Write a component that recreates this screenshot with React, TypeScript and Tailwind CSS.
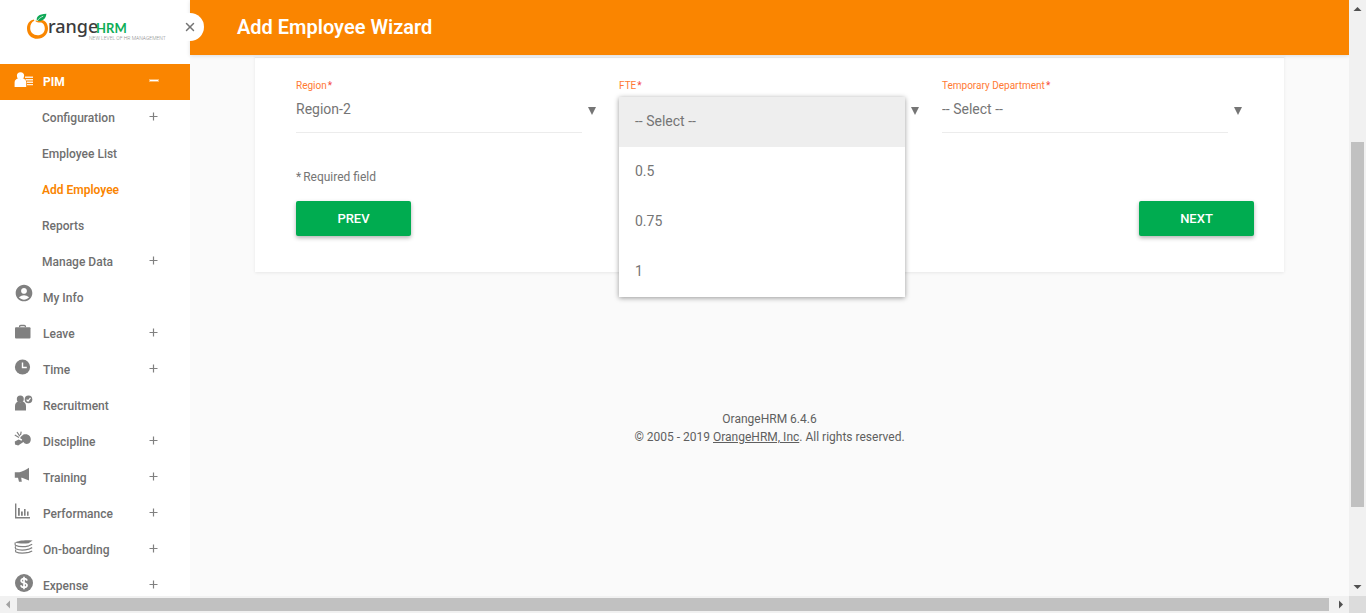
import React, { useState } from "react";
import { X } from "lucide-react";
import { MdAccountCircle } from "react-icons/md";

function PimIcon() {
  return (
    <svg viewBox="0 0 20 16" className="h-4 w-5" fill="currentColor" aria-hidden="true">
      <circle cx="6.5" cy="3.8" r="3.6" />
      <path d="M0.6 15V10.5C0.6 8 2.3 7 4.5 6.3C5.7 7.4 7.3 7.4 8.5 6.3C10.7 7 12.2 8 12.2 10.5V15Z" />
      <path d="M11 4.5H19V5.9H11ZM11.6 7H19V8.4H11.6ZM12.8 9.5H19V10.9H12.8ZM13 12H19V13.2H13Z" opacity="0.85" />
    </svg>
  );
}

function BriefcaseIcon() {
  return (
    <svg viewBox="0 0 18 16" className="h-4 w-4.5" fill="currentColor" aria-hidden="true">
      <path d="M5.6 4.3V3.6Q5.6 2.5 6.7 2.5H10.3Q11.4 2.5 11.400 3.600V4.300" fill="none" stroke="currentColor" strokeWidth="1.300" />
      <rect x="1" y="4.200" width="15.500" height="11.400" rx="1" />
    </svg>
  );
}

function ClockIcon() {
  return (
    <svg viewBox="0 0 18 16" className="h-4 w-4.5" aria-hidden="true">
      <circle cx="8.500" cy="8" r="7.600" fill="currentColor" />
      <path d="M8.500 3.500V8.500H12.800" fill="none" stroke="#fff" strokeWidth="1.400" />
    </svg>
  );
}

function DollarIcon() {
  return (
    <svg viewBox="0 0 20 20" className="size-5" aria-hidden="true">
      <circle cx="10" cy="10" r="9" fill="currentColor" />
      <path
        d="M12.900 7.600C12.700 6.300 11.600 5.700 10 5.700C8.300 5.700 7.200 6.500 7.200 7.800C7.200 10.800 13 9.200 13 12.200C13 13.500 11.800 14.300 10 14.300C8.200 14.300 7.100 13.500 7 12.200M10 3.800V16.200"
        fill="none"
        stroke="#fff"
        strokeWidth="1.700"
      />
    </svg>
  );
}

function RecruitmentIcon() {
  return (
    <svg viewBox="0 0 20 16" className="h-4 w-5" fill="currentColor" aria-hidden="true">
      <circle cx="6.300" cy="4" r="3.500" />
      <path d="M1 15.400V11C1 8.400 2.600 7 4.200 6.600C5.500 7.600 7.300 7.600 8.600 6.600C10.400 7 12 8.400 12 11V15.400Z" />
      <circle cx="14.500" cy="4.400" r="3.800" />
      <path d="M12.600 4.600L14 6L16.500 2.800" fill="none" stroke="#fff" strokeWidth="1.200" />
    </svg>
  );
}

function WhistleIcon() {
  return (
    <svg viewBox="0 0 18 16" className="h-4 w-4.5" fill="currentColor" aria-hidden="true">
      <path d="M6.600 6L9.400 3.600C11.600 2.800 14.200 3.200 15.600 5C17.600 7.600 17 11.400 14.600 12.600C12.400 13.600 10.400 12.600 9.400 11L4.200 14.600L1 13.600L0.800 10.600L4.600 8.600L7.600 9.800L8.200 8.600L6.200 7.200Z" />
      <path d="M0.800 4L5 6.400M3 1L5.800 5.200M7.200 0.600L6.500 4.200" fill="none" stroke="currentColor" strokeWidth="1.200" />
    </svg>
  );
}

function MegaphoneIcon() {
  return (
    <svg viewBox="0 0 16 16" className="size-4" fill="currentColor" aria-hidden="true">
      <path d="M15 0.800V13.600L8 10.800H7.200L7.800 14.800H5L4 10.800H0.800V5.200H5.400C8.600 4.600 11.800 3 15 0.800Z" />
    </svg>
  );
}

function ChartIcon() {
  return (
    <svg viewBox="0 0 16 16" className="size-4" fill="currentColor" aria-hidden="true">
      <path d="M1 0.600H2.400V14H16V15.500H1ZM4 5H5.800V12.800H4ZM7 8.400H8.800V12.800H7ZM10 6H11.600V12.800H10ZM13 8.400H14.600V12.800H13Z" />
    </svg>
  );
}

function StackIcon() {
  return (
    <svg viewBox="0 0 20 16" className="h-4 w-5" aria-hidden="true">
      <path d="M1 3.400C4 1.400 13 0.600 18.600 1.600L14.600 4.200C10 4.800 4 4.600 1 3.400Z" fill="currentColor" />
      <path
        d="M1.300 3.400C0.800 4.600 1 5.400 1.400 6.200C5 8 11 7.800 14.800 6.800L18.200 5.200M1.600 7.200C1.100 8 1.200 9 1.700 9.800C5 11.400 11 11.200 14.800 10.200L18.200 8.600M1.800 10.800C1.300 11.600 1.500 12.400 2 13C5 14.400 11 14.200 14.800 13.400L18.200 12"
        fill="none"
        stroke="currentColor"
        strokeWidth="1.200"
      />
    </svg>
  );
}

function Logo() {
  return (
    <svg viewBox="0 0 148 32" className="h-8 w-37" role="img" aria-label="OrangeHRM">
      <path
        d="M8.800 7.400C4.600 8.200 2 11.800 2 16.400C2 22.400 6.600 26.800 12.400 26.800C18.400 26.800 23 22.400 23 16.600C23 11.400 19.600 7.400 15 7.800C13 8 12.400 9.200 10.200 8.600C11 10.400 13 10.800 15 10.400C18 10.200 19.800 13 19.800 16.400C19.800 20.400 16.600 23.200 12.600 23.200C8.400 23.200 5.200 20.200 5.200 16.200C5.200 12.600 6.800 9.800 9.400 8.800Z"
        fill="#f98600"
      />
      <path d="M12 9C10.800 5 13.600 2 21.400 1.800C21 6.600 17.400 9.600 13.400 8.800Z" fill="#0fa857" />
      <path d="M12 9.200C13.600 6.800 15.600 5.200 18.200 4.200" fill="none" stroke="#fff" strokeWidth="0.700" />
      <text x="23" y="21" fontFamily="Noto Sans, sans-serif" fontSize="18" fill="#3c3c3c">range</text>
      <text x="71" y="21" fontFamily="Lato, sans-serif" fontWeight="700" fontSize="13" fill="#0fae57">HRM</text>
      <text x="64" y="28" fontFamily="Roboto, sans-serif" fontWeight="300" fontSize="5" fill="#8a8a8a">NEW LEVEL OF HR MANAGEMENT</text>
    </svg>
  );
}

type Item = { label: string; icon: React.ReactNode; more: boolean };

const subItems = [
  { label: "Configuration", more: true },
  { label: "Employee List", more: false },
  { label: "Add Employee", more: false, active: true },
  { label: "Reports", more: false },
  { label: "Manage Data", more: true },
];

const items: Item[] = [
  { label: "My Info", icon: <MdAccountCircle className="mb-1 size-5" />, more: false },
  { label: "Leave", icon: <BriefcaseIcon />, more: true },
  { label: "Time", icon: <ClockIcon />, more: true },
  { label: "Recruitment", icon: <RecruitmentIcon />, more: false },
  { label: "Discipline", icon: <WhistleIcon />, more: true },
  { label: "Training", icon: <MegaphoneIcon />, more: true },
  { label: "Performance", icon: <ChartIcon />, more: true },
  { label: "On-boarding", icon: <StackIcon />, more: true },
  { label: "Expense", icon: <DollarIcon />, more: true },
];

function Plus() {
  return (
    <svg viewBox="0 0 9 9" className="mb-1 size-[9px]" aria-hidden="true">
      <path d="M4.500 0.500V8.500M0.500 4.500H8.500" stroke="#808080" strokeWidth="1.200" />
    </svg>
  );
}

function Sidebar() {
  return (
    <aside className="w-[190px] shrink-0 bg-white text-[12px] font-medium text-[#6f6f6f]">
      <div className="flex h-16 pt-3 pl-[25px]">
        <Logo />
      </div>
      <nav>
        <a href="#pim" className="flex h-9 items-center bg-[#fa8500] pr-8 pl-3.5 font-bold text-white">
          <span className="flex w-[29px] pb-1"><PimIcon /></span>
          <span className="flex-1">PIM</span>
          <span className="mb-1 h-px w-2 bg-white outline outline-white/40" />
        </a>
        {subItems.map((s) => (
          <a
            key={s.label}
            href="#pim"
            className={
              s.active
                ? "flex h-9 items-center pr-8 pl-[42px] font-semibold text-[#fa8500]"
                : "flex h-9 items-center pr-8 pl-[42px]"
            }
          >
            <span className="flex-1">{s.label}</span>
            {s.more && <Plus />}
          </a>
        ))}
        {items.map((i) => (
          <a key={i.label} href="#menu" className="flex h-9 items-center pr-8 pl-3.5">
            <span className="flex w-[29px] pb-1.5 text-[#808080]">{i.icon}</span>
            <span className="flex-1">{i.label}</span>
            {i.more && <Plus />}
          </a>
        ))}
      </nav>
    </aside>
  );
}

function FieldLabel({ id, text }: { id: string; text: string }) {
  return (
    <label htmlFor={id} className="block text-[10px] leading-4 text-[#ff7a33]">
      {text}
      <span className="ml-px text-[#f5483d]">*</span>
    </label>
  );
}

function Caret() {
  return (
    <svg viewBox="0 0 8 8" className="mb-1.5 h-2 w-2" aria-hidden="true">
      <path d="M0 0H8L4 8Z" fill="#757575" />
    </svg>
  );
}

function SelectField({ id, label, value }: { id: string; label: string; value: string }) {
  return (
    <div className="pr-3 pl-[11px]">
      <FieldLabel id={id} text={label} />
      <div className="flex items-center gap-1.5">
        <select
          id={id}
          className="h-[39px] min-w-0 flex-1 appearance-none border-b border-[#ececec] bg-transparent pb-2 text-[14px] text-[#757575] outline-none"
        >
          <option>{value}</option>
        </select>
        <Caret />
      </div>
    </div>
  );
}

const fteOptions = ["-- Select --", "0.5", "0.75", "1"];

function FteField() {
  const [value, setValue] = useState(fteOptions[0]);
  return (
    <div className="pr-3 pl-[11px]">
      <FieldLabel id="fte" text="FTE" />
      <div className="flex items-center gap-1.5">
        <div className="relative min-w-0 flex-1">
          <button
            id="fte"
            type="button"
            aria-haspopup="listbox"
            aria-expanded="true"
            className="block h-[39px] w-full border-b border-[#ececec]"
          />
          <ul
            role="listbox"
            aria-label="FTE"
            className="absolute inset-x-0 top-[3px] z-10 bg-white text-[14px] text-[#757575] shadow-[0_1px_5px_rgba(0,0,0,0.4)]"
          >
            {fteOptions.map((o) => (
              <li
                key={o}
                role="option"
                aria-selected={o === value}
                onClick={() => setValue(o)}
                className={
                  o === value
                    ? "flex h-[50px] cursor-pointer items-center bg-[#eeeeee] px-4 pb-0.5"
                    : "flex h-[50px] cursor-pointer items-center px-4 pb-0.5"
                }
              >
                {o}
              </li>
            ))}
          </ul>
        </div>
        <Caret />
      </div>
    </div>
  );
}

function WizardButton({ children }: { children: string }) {
  return (
    <button
      type="button"
      className="h-[35px] w-[115px] rounded-xs bg-[#00ac50] text-[13px] font-medium text-white shadow-[0_2px_4px_rgba(0,0,0,0.3)]"
    >
      {children}
    </button>
  );
}

function VerticalScrollbar() {
  return (
    <div className="flex w-[17px] shrink-0 flex-col items-center bg-[#f1f1f1]" aria-hidden="true">
      <svg viewBox="0 0 17 17" className="size-[17px]"><path d="M4.500 11L8.500 7L12.500 11Z" fill="#505050" /></svg>
      <div className="flex w-[13px] flex-1 flex-col">
        <div className="grow-125" />
        <div className="grow-365 bg-[#c1c1c1]" />
        <div className="grow-72" />
      </div>
      <svg viewBox="0 0 17 17" className="size-[17px]"><path d="M4.500 6H12.500L8.500 10Z" fill="#505050" /></svg>
    </div>
  );
}

function HorizontalScrollbar() {
  return (
    <div className="flex h-[17px] shrink-0 items-center bg-[#f1f1f1]" aria-hidden="true">
      <svg viewBox="0 0 17 17" className="size-[17px]"><path d="M10 4.500V12.500L6 8.500Z" fill="#a3a3a3" /></svg>
      <div className="mr-[3px] h-[13px] flex-1 bg-[#c1c1c1]" />
      <svg viewBox="0 0 17 17" className="size-[17px]"><path d="M7 4.500V12.500L11 8.500Z" fill="#505050" /></svg>
      <div className="h-full w-[17px] bg-[#dcdcdc]" />
    </div>
  );
}

export default function App() {
  return (
    <div className="flex h-screen flex-col overflow-hidden bg-[#fafafa] font-[Roboto,sans-serif]">
      <div className="flex min-h-0 flex-1">
        <div className="flex min-w-0 flex-1 overflow-hidden">
          <Sidebar />
          <div className="min-w-0 flex-1">
            <header className="relative flex h-[55px] items-center bg-[#fa8500] pb-0.5 pl-[47px] shadow-[0_1px_4px_rgba(0,0,0,0.12)]">
              <button
                type="button"
                aria-label="Close menu"
                className="absolute top-[13px] -left-3.5 flex size-7 items-center justify-center rounded-full bg-white text-[#757575]"
              >
                <X className="size-3.5" strokeWidth={2.5} />
              </button>
              <h1 className="text-[20px] font-semibold text-white">Add Employee Wizard</h1>
            </header>
            <main className="px-[65px]">
              <form
                onSubmit={(e) => e.preventDefault()}
                className="bg-white px-[30px] pb-9 shadow-[0_1px_3px_rgba(0,0,0,0.08)]"
              >
                <div className="-mx-[30px] h-[3px] border-b border-[#ececec] bg-[#f8f8f8]" />
                <div className="grid grid-cols-3 pt-5">
                  <SelectField id="region" label="Region" value="Region-2" />
                  <FteField />
                  <SelectField id="department" label="Temporary Department" value="-- Select --" />
                </div>
                <p className="mt-8 pl-[11px] text-[12px] leading-6 text-[#757575]">
                  <span className="mr-0.5">*</span>Required field
                </p>
                <div className="mt-3 flex justify-between pl-[11px]">
                  <WizardButton>PREV</WizardButton>
                  <WizardButton>NEXT</WizardButton>
                </div>
              </form>
            </main>
            <footer className="pt-[138px] text-center text-[12px] leading-[18px] text-[#5f5f5f]">
              <p>OrangeHRM 6.4.6</p>
              <p>
                © 2005 - 2019 <a href="#home" className="underline">OrangeHRM, Inc</a>. All rights reserved.
              </p>
            </footer>
          </div>
        </div>
        <VerticalScrollbar />
      </div>
      <HorizontalScrollbar />
    </div>
  );
}
